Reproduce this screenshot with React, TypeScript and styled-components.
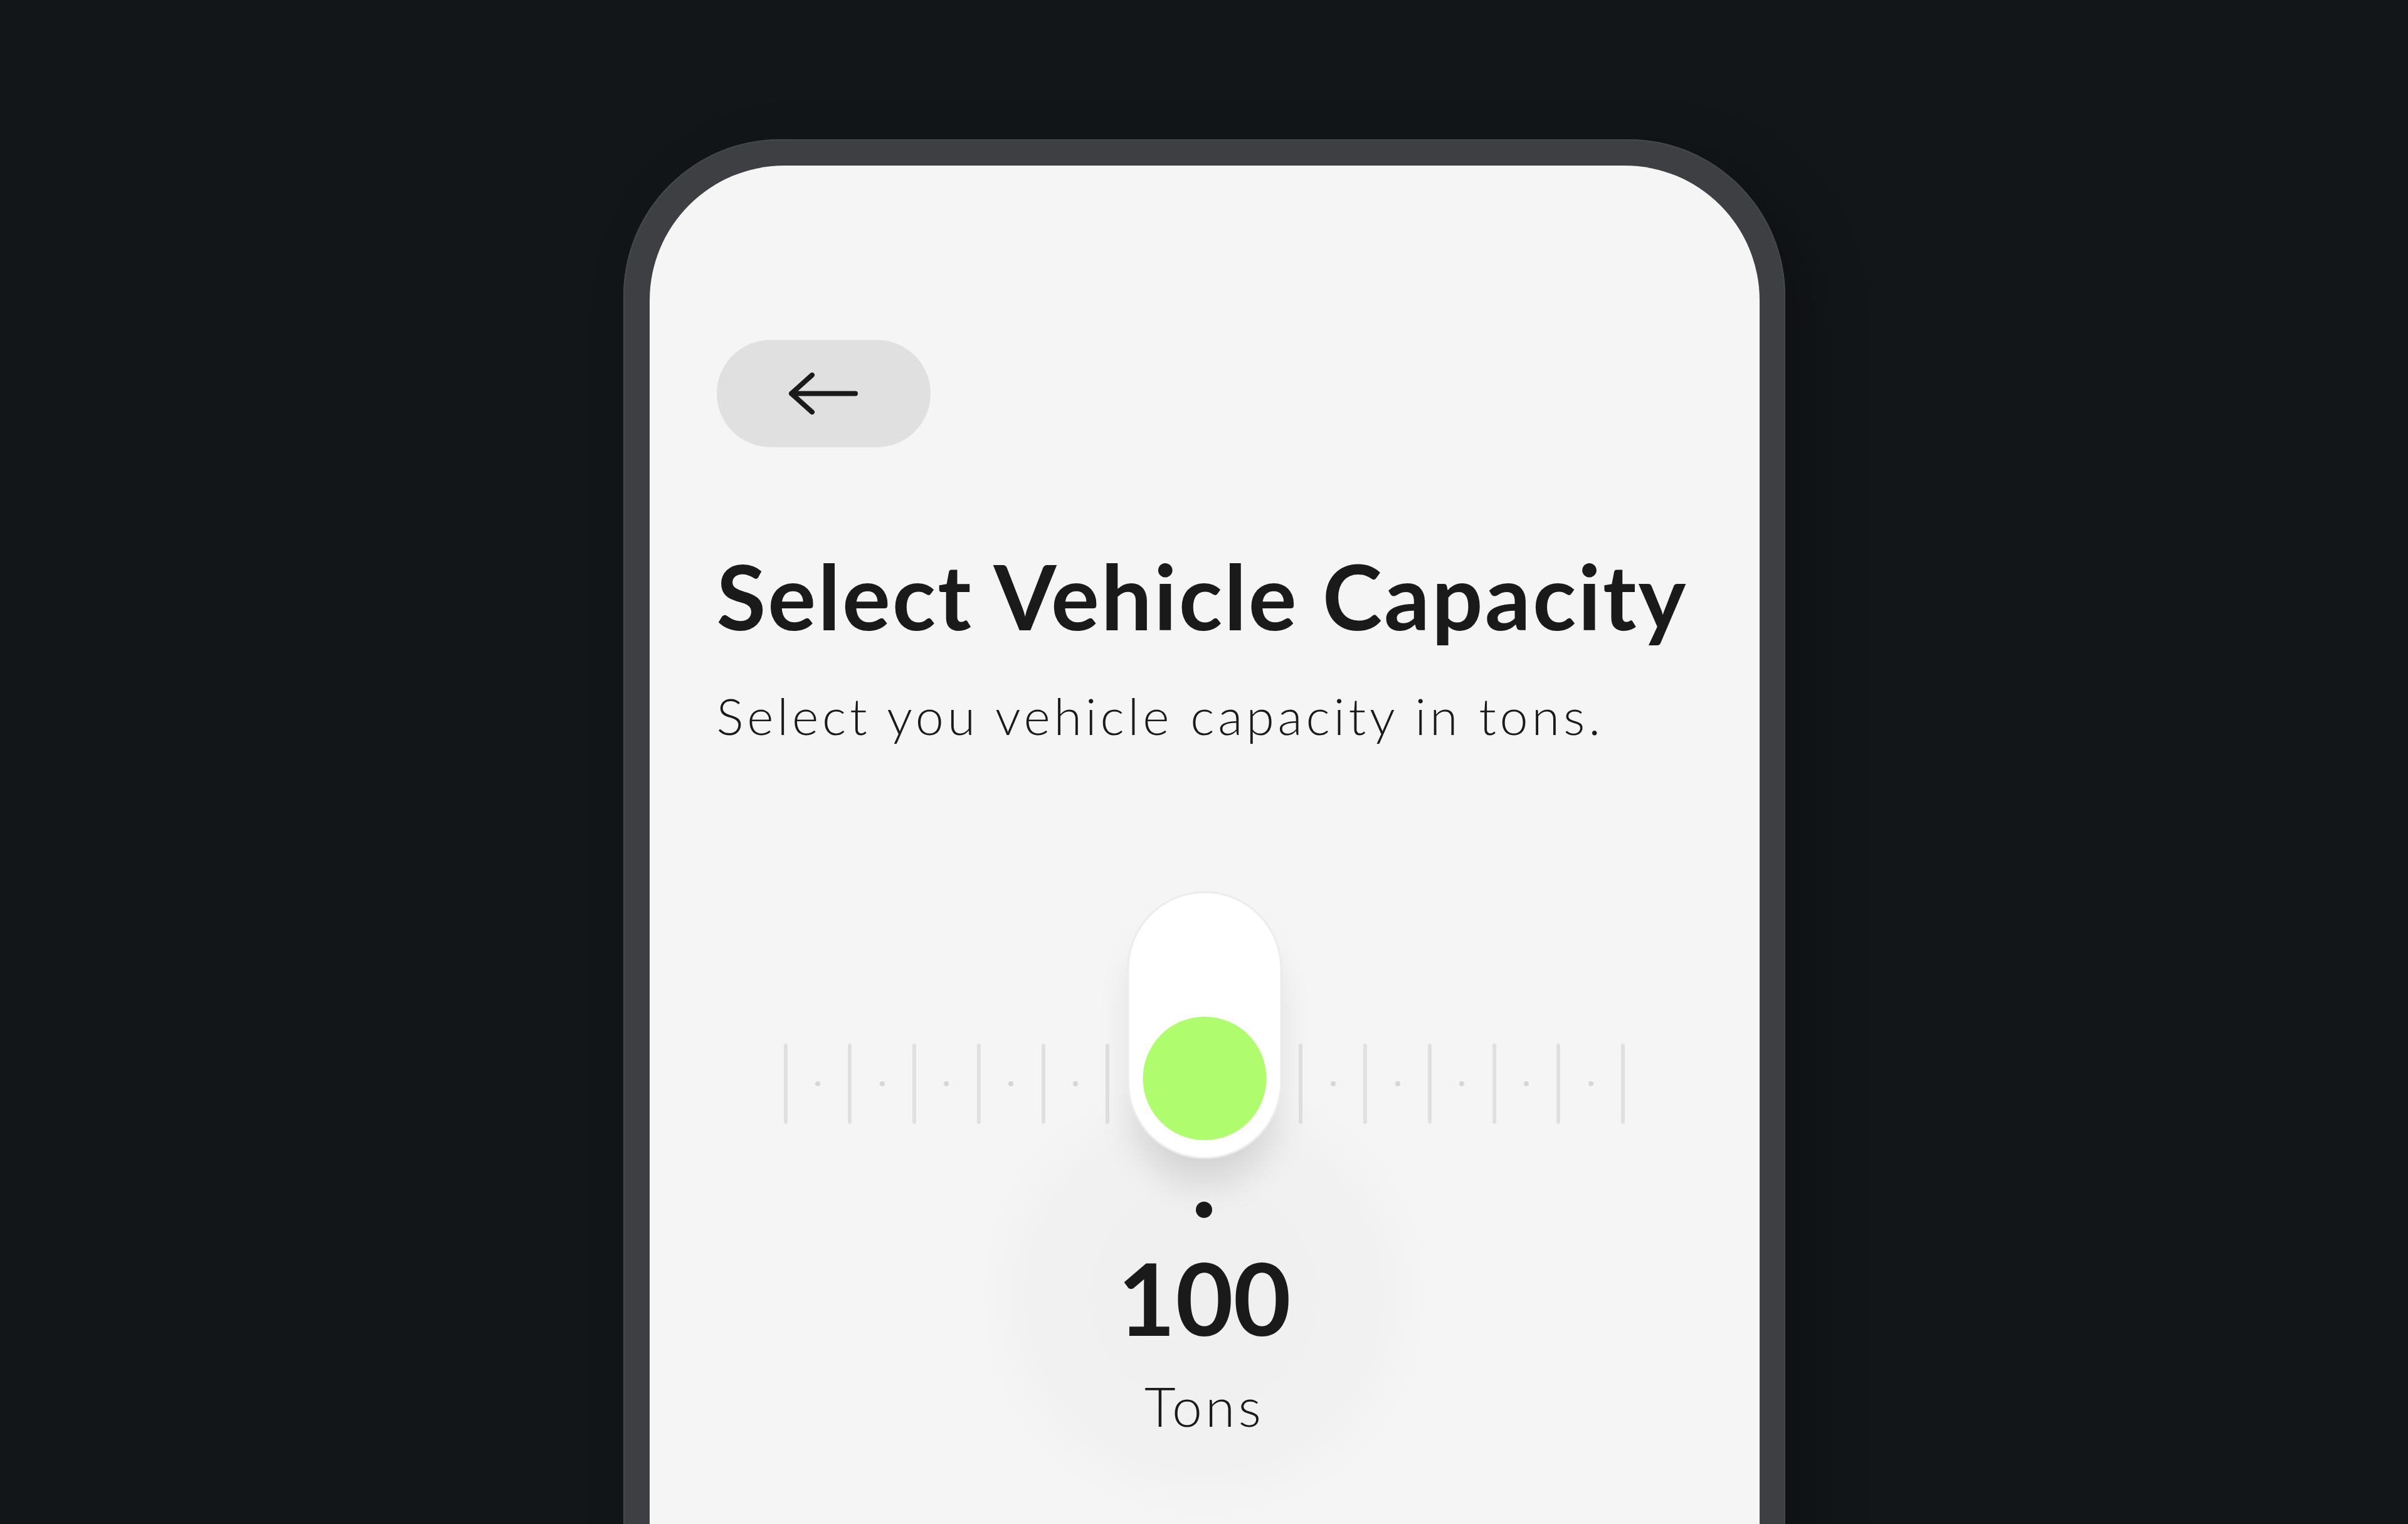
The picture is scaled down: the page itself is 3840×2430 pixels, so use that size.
import React from "react";
import styled, { createGlobalStyle } from "styled-components";

const GlobalStyle = createGlobalStyle`
  html, body {
    margin: 0;
    padding: 0;
    background: #131619;
  }
  body {
    width: 3840px;
    height: 2430px;
    overflow: hidden;
    font-family: Lato, "Noto Sans", sans-serif;
    color: #1a1a1a;
  }
`;

const Page = styled.div`
  width: 3840px;
  height: 2430px;
  box-sizing: border-box;
  padding-top: 222px;
  display: flex;
  justify-content: center;
  overflow: hidden;
`;

const PhoneFrame = styled.div`
  flex: none;
  width: 1853px;
  height: 2300px;
  box-sizing: border-box;
  padding: 42px 41px 0 42px;
  background: #3e3f43;
  border-radius: 250px 250px 0 0;
  box-shadow: inset 0 0 0 2px #46474c, 40px 30px 90px rgba(0, 0, 0, 0.25);
`;

const Screen = styled.div`
  height: 100%;
  box-sizing: border-box;
  padding-top: 278px;
  background: #f5f5f5;
  border-radius: 215px 215px 0 0;
  display: flex;
  flex-direction: column;
`;

const Header = styled.div`
  padding: 0 107px;
  display: flex;
  flex-direction: column;
  align-items: flex-start;
`;

const BackButton = styled.button`
  width: 341px;
  height: 171px;
  border: none;
  border-radius: 86px;
  background: #e0e0e0;
  display: flex;
  align-items: center;
  justify-content: center;
  padding: 0;
  cursor: pointer;
`;

const Title = styled.h1`
  margin: 165px 0 0;
  font-size: 144px;
  line-height: 1;
  font-weight: 700;
  letter-spacing: 3px;
  white-space: nowrap;
  color: #1a1a1a;
`;

const Subtitle = styled.p`
  margin: 78px 0 0;
  font-size: 81px;
  line-height: 1;
  font-weight: 300;
  letter-spacing: 5.8px;
  white-space: nowrap;
  color: #1a1a1a;
`;

const SliderArea = styled.div`
  position: relative;
  align-self: center;
  width: 1387px;
  height: 427px;
  margin-top: 240px;
`;

const Track = styled.div`
  margin-top: 242px;
  height: 130px;
  display: flex;
  align-items: center;
`;

const TickCell = styled.div`
  flex: none;
  width: 51.37px;
  display: flex;
  justify-content: center;
`;

const Tick = styled.div<{ $long: boolean }>`
  width: ${(p) => (p.$long ? "6px" : "8px")};
  height: ${(p) => (p.$long ? "128px" : "8px")};
  border-radius: 4px;
  background: ${(p) => (p.$long ? "#e0e0e0" : "#d6d6d6")};
`;

const Thumb = styled.div`
  position: absolute;
  z-index: 2;
  top: 0;
  left: 50%;
  transform: translateX(-50%);
  width: 247px;
  height: 427px;
  box-sizing: border-box;
  padding-bottom: 27px;
  border: 3px solid #ececec;
  border-radius: 124px;
  background: #ffffff;
  box-shadow: 0 50px 60px -12px rgba(0, 0, 0, 0.13);
  display: flex;
  align-items: flex-end;
  justify-content: center;
`;

const Knob = styled.div`
  width: 197px;
  height: 197px;
  border-radius: 50%;
  background: #affc6e;
`;

const ValueBlock = styled.div`
  position: relative;
  align-self: center;
  margin-top: 68px;
  display: flex;
  flex-direction: column;
  align-items: center;

  &::before {
    content: "";
    position: absolute;
    top: -210px;
    left: 50%;
    width: 720px;
    height: 720px;
    transform: translateX(-50%);
    border-radius: 50%;
    background: radial-gradient(
      circle,
      rgba(0, 0, 0, 0.022) 0%,
      rgba(0, 0, 0, 0.016) 55%,
      rgba(0, 0, 0, 0) 71%
    );
  }
`;

const Marker = styled.div`
  position: relative;
  width: 26px;
  height: 26px;
  border-radius: 50%;
  background: #1a1a1a;
`;

const Value = styled.div`
  position: relative;
  margin-top: 47px;
  font-size: 159px;
  line-height: 1;
  font-weight: 700;
  color: #1a1a1a;
`;

const Unit = styled.div`
  position: relative;
  margin-top: 51px;
  font-size: 86px;
  line-height: 1;
  font-weight: 300;
  letter-spacing: 5px;
  color: #1a1a1a;
`;

const ArrowLeft = () => (
  <svg width="110" height="67" viewBox="0 0 110 67" fill="none">
    <path
      d="M4 33.5H106M37 4L4 33.5L37 63"
      stroke="#1a1a1a"
      strokeWidth="8"
      strokeLinecap="round"
      strokeLinejoin="round"
    />
  </svg>
);

const TICK_COUNT = 27;

export default function App() {
  return (
    <>
      <GlobalStyle />
      <Page>
        <PhoneFrame>
          <Screen>
            <Header>
              <BackButton aria-label="Back">
                <ArrowLeft />
              </BackButton>
              <Title>Select Vehicle Capacity</Title>
              <Subtitle>Select you vehicle capacity in tons.</Subtitle>
            </Header>
            <SliderArea>
              <Track>
                {Array.from({ length: TICK_COUNT }, (_, i) => (
                  <TickCell key={i}>
                    <Tick $long={i % 2 === 0} />
                  </TickCell>
                ))}
              </Track>
              <Thumb>
                <Knob />
              </Thumb>
            </SliderArea>
            <ValueBlock>
              <Marker />
              <Value>100</Value>
              <Unit>Tons</Unit>
            </ValueBlock>
          </Screen>
        </PhoneFrame>
      </Page>
    </>
  );
}
